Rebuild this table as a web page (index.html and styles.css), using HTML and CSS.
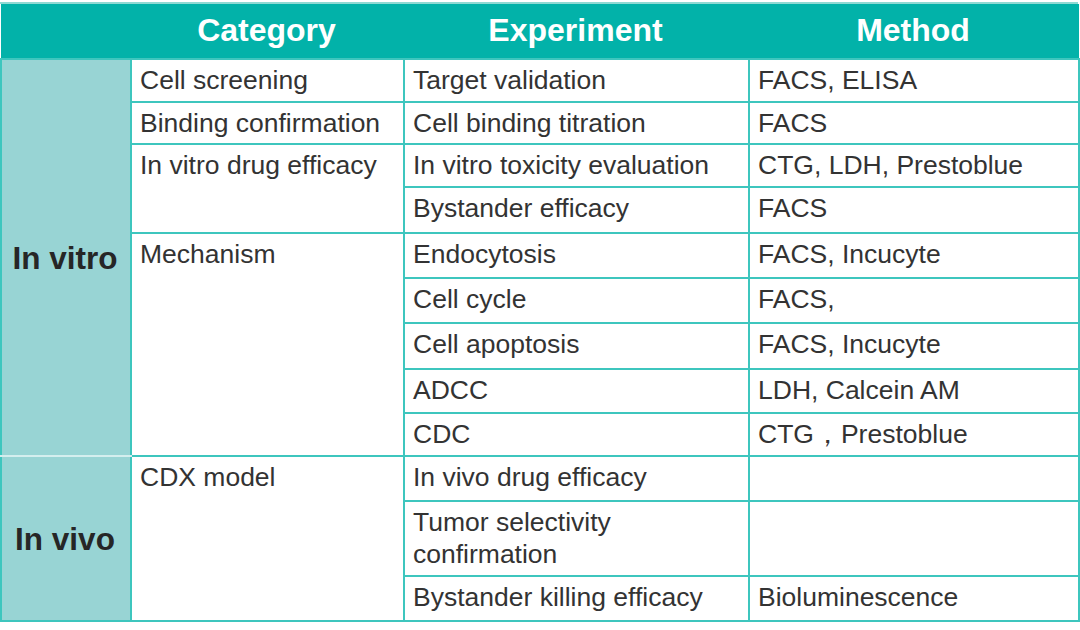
FILE: index.html
```html
<!DOCTYPE html>
<html>
<head>
<meta charset="utf-8">
<link rel="stylesheet" href="styles.css">
</head>
<body>
<div class="frame">
<table class="grid">
  <colgroup>
    <col class="c1"><col class="c2"><col class="c3"><col class="c4">
  </colgroup>
  <thead>
    <tr class="head">
      <th></th>
      <th>Category</th>
      <th>Experiment</th>
      <th>Method</th>
    </tr>
  </thead>
  <tbody>
    <tr class="h43">
      <td class="group" rowspan="9">In vitro</td>
      <td>Cell screening</td>
      <td>Target validation</td>
      <td>FACS, ELISA</td>
    </tr>
    <tr class="h42">
      <td>Binding confirmation</td>
      <td>Cell binding titration</td>
      <td>FACS</td>
    </tr>
    <tr class="h43">
      <td rowspan="2">In vitro drug efficacy</td>
      <td>In vitro toxicity evaluation</td>
      <td>CTG, LDH, Prestoblue</td>
    </tr>
    <tr class="h46">
      <td>Bystander efficacy</td>
      <td>FACS</td>
    </tr>
    <tr class="h45">
      <td rowspan="5">Mechanism</td>
      <td>Endocytosis</td>
      <td>FACS, Incucyte</td>
    </tr>
    <tr class="h45">
      <td>Cell cycle</td>
      <td>FACS,</td>
    </tr>
    <tr class="h46">
      <td>Cell apoptosis</td>
      <td>FACS, Incucyte</td>
    </tr>
    <tr class="h44">
      <td>ADCC</td>
      <td>LDH, Calcein AM</td>
    </tr>
    <tr class="h43">
      <td>CDC</td>
      <td>CTG，Prestoblue</td>
    </tr>
    <tr class="h45">
      <td class="group last" rowspan="3">In vivo</td>
      <td rowspan="3">CDX model</td>
      <td>In vivo drug efficacy</td>
      <td></td>
    </tr>
    <tr class="h75">
      <td>Tumor selectivity<br>confirmation</td>
      <td></td>
    </tr>
    <tr class="h45">
      <td>Bystander killing efficacy</td>
      <td>Bioluminescence</td>
    </tr>
  </tbody>
</table>
</div>
</body>
</html>
```

FILE: styles.css
```css
html, body {
  margin: 0;
  padding: 0;
  background: #ffffff;
}

body {
  padding-top: 2px;
  font-family: "Liberation Sans", Arial, sans-serif;
  color: #333333;
}

.frame {
  width: 1078px;
  border-top: 2px solid #8fdad4;
}

.grid {
  border-collapse: collapse;
  table-layout: fixed;
  width: 1078px;
}

.c1 { width: 130px; }
.c2 { width: 273px; }
.c3 { width: 345px; }
.c4 { width: 330px; }

.head {
  height: 55px;
}

.head th {
  background: #02b2a9;
  color: #ffffff;
  font-size: 32px;
  font-weight: bold;
  text-align: center;
  vertical-align: middle;
  padding: 0 2px 2px 0;
  border: 0;
  border-bottom: 2px solid #3ec6be;
}

.grid td {
  font-size: 26.5px;
  line-height: 32px;
  padding: 4px 9px 4px 8px;
  vertical-align: top;
  border: 2px solid #3ec6be;
  white-space: nowrap;
}

.grid td.group {
  background: #98d4d4;
  color: #262626;
  font-size: 31.5px;
  font-weight: bold;
  text-align: center;
  vertical-align: middle;
  padding: 0 2px 0 0;
  border-bottom-color: #d4eeee;
}

.grid td.group.last {
  border-bottom-color: #3ec6be;
}

.h42 { height: 42px; }
.h43 { height: 43px; }
.h44 { height: 44px; }
.h45 { height: 45px; }
.h46 { height: 46px; }
.h75 { height: 75px; }
```
